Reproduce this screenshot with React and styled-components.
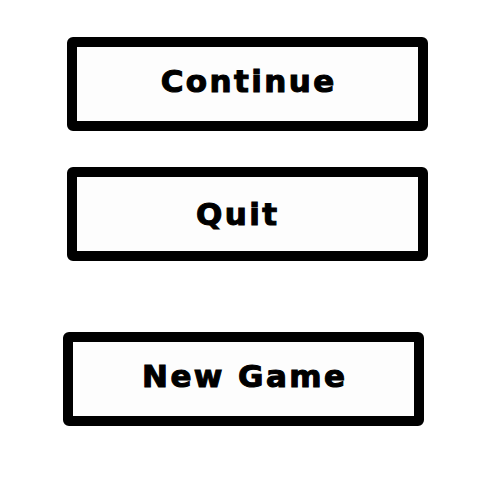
import React from 'react'
import styled, { createGlobalStyle } from 'styled-components'

const GlobalStyle = createGlobalStyle`
    html, body {
        margin: 0;
        padding: 0;
        background: #ffffff;
    }
`

const Menu = styled.div`
    display: flex;
    flex-direction: column;
    align-items: flex-start;
    width: 500px;
    height: 500px;
    padding-top: 37px;
    box-sizing: border-box;
`

const MenuButton = styled.button`
    display: flex;
    align-items: center;
    justify-content: center;
    box-sizing: border-box;
    width: 361px;
    height: 94px;
    margin-left: ${({ left }) => left}px;
    margin-top: ${({ top }) => top || 0}px;
    padding: 0 ${({ shift }) => (shift > 0 ? shift : 0)}px ${({ lift }) => lift || 0}px ${({ shift }) => (shift < 0 ? -shift : 0)}px;
    border: 10px solid #000;
    border-radius: 6px;
    background: #fdfdfd;
    cursor: pointer;
`

const Label = styled.span`
    font-family: "DejaVu Sans", "Liberation Sans", sans-serif;
    font-weight: 700;
    font-size: 31px;
    line-height: 1;
    letter-spacing: 2.4px;
    margin-right: -2.4px;
    color: #000;
    -webkit-text-stroke: 1.1px #000;
`

const App = () => {
    return (
        <>
            <GlobalStyle />
            <Menu>
                <MenuButton left={67} lift={6}>
                    <Label>Continue</Label>
                </MenuButton>
                <MenuButton left={67} top={36} shift={22}>
                    <Label>Quit</Label>
                </MenuButton>
                <MenuButton left={63} top={71} lift={6}>
                    <Label>New Game</Label>
                </MenuButton>
            </Menu>
        </>
    )
}

export default App
